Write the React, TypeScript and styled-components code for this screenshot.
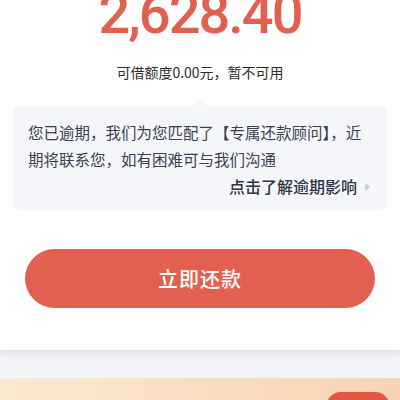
import React from 'react';
import styled, { createGlobalStyle } from 'styled-components';

const GlobalStyle = createGlobalStyle`
  html, body {
    margin: 0;
    padding: 0;
    background: #f3f4f8;
    font-family: "Noto Sans CJK SC", "Noto Sans", sans-serif;
  }
`;

const Page = styled.div`
  width: 400px;
  height: 400px;
  overflow: hidden;
  display: flex;
  flex-direction: column;
`;

const Top = styled.section`
  flex-shrink: 0;
  background: #fff;
  display: flex;
  flex-direction: column;
  align-items: center;
  padding: 0 13px 42px;
  box-shadow: 0 3px 6px rgba(160, 165, 180, 0.25);
  position: relative;
  z-index: 1;
`;

const Amount = styled.div`
  margin-top: -14px;
  font-family: Roboto, "Liberation Sans", sans-serif;
  font-size: 56px;
  font-weight: 500;
  line-height: 56px;
  letter-spacing: -2px;
  color: #e2604f;
`;

const Quota = styled.div`
  margin-top: 20px;
  font-size: 14px;
  line-height: 20px;
  color: #2b2b2b;
`;

const Tip = styled.div`
  position: relative;
  margin-top: 24px;
  align-self: stretch;
  background: #f5f6fa;
  border-radius: 6px;
  padding: 13px 15px 10px;
  color: #3a3f52;
  font-size: 15.5px;
  line-height: 27px;

  &::before {
    content: '';
    position: absolute;
    top: -8px;
    left: 50%;
    margin-left: -9px;
    border-left: 9px solid transparent;
    border-right: 9px solid transparent;
    border-bottom: 8px solid #f5f6fa;
  }
`;

const TipText = styled.p`
  margin: 0;
`;

const MoreLink = styled.div`
  display: flex;
  justify-content: flex-end;
  align-items: center;
  gap: 8px;
  font-size: 16px;
  font-weight: 500;
  color: #2e3345;
  padding-right: 2px;
`;

const Arrow = styled.span`
  width: 0;
  height: 0;
  border-top: 4px solid transparent;
  border-bottom: 4px solid transparent;
  border-left: 5px solid #c9ccd4;
`;

const PayButton = styled.button`
  margin-top: 39px;
  align-self: stretch;
  margin-left: 12px;
  margin-right: 12px;
  height: 59px;
  border: none;
  border-radius: 30px;
  background: #e2604f;
  color: #fff;
  font-family: inherit;
  font-size: 20px;
  font-weight: 500;
  letter-spacing: 1px;
`;

const Gap = styled.div`
  flex-shrink: 0;
  height: 28px;
  background: #f3f4f8;
`;

const Promo = styled.div`
  flex-shrink: 0;
  height: 60px;
  background: linear-gradient(90deg, #fbe8d0 0%, #f9dcc0 60%, #f8d2b4 100%);
  display: flex;
  justify-content: flex-end;
  align-items: flex-start;
  padding: 14px 10px 0 0;
`;

const PromoBtn = styled.div`
  width: 64px;
  height: 30px;
  border-radius: 15px;
  background: #e4563f;
`;

export default function App() {
  return (
    <Page>
      <GlobalStyle />
      <Top>
        <Amount>2,628.40</Amount>
        <Quota>可借额度0.00元，暂不可用</Quota>
        <Tip>
          <TipText>您已逾期，我们为您匹配了【专属还款顾问】，近期将联系您，如有困难可与我们沟通</TipText>
          <MoreLink>
            点击了解逾期影响
            <Arrow />
          </MoreLink>
        </Tip>
        <PayButton>立即还款</PayButton>
      </Top>
      <Gap />
      <Promo>
        <PromoBtn />
      </Promo>
    </Page>
  );
}
